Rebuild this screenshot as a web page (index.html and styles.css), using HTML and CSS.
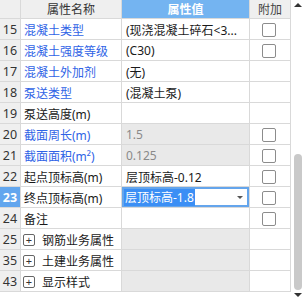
FILE: index.html
```html
<!DOCTYPE html>
<html>
<head>
<meta charset="utf-8">
<link rel="stylesheet" href="styles.css">
</head>
<body>
<div class="wrap">
  <div class="grid">
    <div class="c h num"></div>
    <div class="c h name-h">属性名称</div>
    <div class="c h val-h">属性值</div>
    <div class="c h add-h">附加</div>

    <div class="c num">15</div>
    <div class="c name blue">混凝土类型</div>
    <div class="c val">(现浇混凝土碎石&lt;3...</div>
    <div class="c add"><span class="cb"></span></div>

    <div class="c num">16</div>
    <div class="c name blue">混凝土强度等级</div>
    <div class="c val">(C30)</div>
    <div class="c add"><span class="cb"></span></div>

    <div class="c num">17</div>
    <div class="c name blue">混凝土外加剂</div>
    <div class="c val">(无)</div>
    <div class="c add"></div>

    <div class="c num">18</div>
    <div class="c name blue">泵送类型</div>
    <div class="c val">(混凝土泵)</div>
    <div class="c add"></div>

    <div class="c num">19</div>
    <div class="c name">泵送高度(m)</div>
    <div class="c val"></div>
    <div class="c add"></div>

    <div class="c num">20</div>
    <div class="c name blue">截面周长(m)</div>
    <div class="c val ro">1.5</div>
    <div class="c add"><span class="cb"></span></div>

    <div class="c num">21</div>
    <div class="c name blue">截面面积(m²)</div>
    <div class="c val ro">0.125</div>
    <div class="c add"><span class="cb"></span></div>

    <div class="c num">22</div>
    <div class="c name">起点顶标高(m)</div>
    <div class="c val">层顶标高-0.12</div>
    <div class="c add"><span class="cb"></span></div>

    <div class="c num sel">23</div>
    <div class="c name">终点顶标高(m)</div>
    <div class="c val edit"><span class="hl">层顶标高-1.8</span><span class="arrow"></span></div>
    <div class="c add"><span class="cb"></span></div>

    <div class="c num">24</div>
    <div class="c name">备注</div>
    <div class="c val"></div>
    <div class="c add"><span class="cb"></span></div>

    <div class="c num">25</div>
    <div class="c name grp"><span class="exp">+</span>钢筋业务属性</div>
    <div class="c val gray"></div>
    <div class="c add"></div>

    <div class="c num">35</div>
    <div class="c name grp"><span class="exp">+</span>土建业务属性</div>
    <div class="c val gray"></div>
    <div class="c add"></div>

    <div class="c num">43</div>
    <div class="c name grp"><span class="exp">+</span>显示样式</div>
    <div class="c val gray"></div>
    <div class="c add"></div>
  </div>
  <div class="scroll">
    <span class="up"></span>
    <span class="track"><span class="thumb"></span></span>
    <span class="down"></span>
  </div>
</div>
</body>
</html>
```

FILE: styles.css
```css
html, body {
  margin: 0;
  padding: 0;
  background: #ffffff;
}
body {
  font-family: "Noto Sans", "Noto Sans CJK SC", sans-serif;
  font-size: 12px;
  color: #1a1a1a;
}
.wrap {
  display: flex;
  width: 305px;
  height: 299px;
}
.grid {
  display: grid;
  grid-template-columns: 21px 101px 128px 41px;
  grid-template-rows: 19px repeat(13, 21px);
  align-self: flex-start;
}
.c {
  box-sizing: border-box;
  border-right: 1px solid #d9d9d9;
  border-bottom: 1px solid #d9d9d9;
  display: flex;
  align-items: center;
  white-space: nowrap;
  overflow: hidden;
  padding-top: 1px;
}
.h {
  background: #efefef;
  justify-content: center;
  color: #333;
  padding-top: 0;
}
.val-h {
  background: #74b4f1;
  color: #ffffff;
  font-weight: 600;
}
.add-h {
  color: #444;
}
.num {
  background: #efefef;
  justify-content: center;
  color: #333;
  font-size: 12.5px;
}
.num.sel {
  background: #62a6ee;
  color: #ffffff;
  font-weight: 700;
}
.name {
  padding-left: 3px;
}
.blue {
  color: #2f63e6;
}
.val {
  padding-left: 4px;
}
.ro {
  background: #e9e9e9;
  color: #8a8a8a;
}
.gray {
  background: #e9e9e9;
}
.edit {
  box-shadow: inset 0 0 0 2px #64a5ec;
  padding-left: 2px;
  position: relative;
}
.hl {
  background: #3b8ff5;
  color: #ffffff;
  padding: 1px 1px 1px 1px;
  line-height: 15px;
}
.arrow {
  position: absolute;
  right: 6px;
  top: 9px;
  width: 0;
  height: 0;
  border-left: 3px solid transparent;
  border-right: 3px solid transparent;
  border-top: 3px solid #555;
}
.add {
  justify-content: center;
  padding-left: 0;
  padding-right: 2px;
}
.cb {
  box-sizing: border-box;
  width: 14px;
  height: 14px;
  border: 1px solid #8c8c8c;
  border-radius: 2px;
  background: #fff;
}
.grp {
  padding-left: 2px;
}
.exp {
  box-sizing: border-box;
  width: 12px;
  height: 12px;
  border: 1px solid #666;
  border-radius: 2px;
  display: inline-flex;
  align-items: center;
  justify-content: center;
  font-size: 11px;
  line-height: 1;
  color: #333;
  margin-right: 7px;
}
.scroll {
  width: 14px;
  display: flex;
  flex-direction: column;
  align-items: center;
  padding-left: 0;
}
.up {
  width: 0;
  height: 0;
  border-left: 4px solid transparent;
  border-right: 4px solid transparent;
  border-bottom: 4px solid #333;
  margin-top: 3px;
}
.track {
  flex: 1;
  display: flex;
  flex-direction: column;
  justify-content: flex-end;
  padding-bottom: 3px;
}
.thumb {
  width: 8px;
  height: 136px;
  background: #c9c9c9;
  border-radius: 4px;
}
.down {
  width: 0;
  height: 0;
  border-left: 4px solid transparent;
  border-right: 4px solid transparent;
  border-top: 4px solid #333;
  margin-bottom: 2px;
}
```
